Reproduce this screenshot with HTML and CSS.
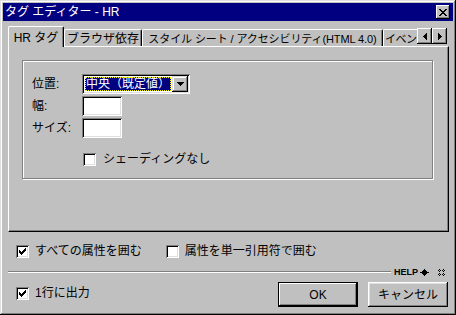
FILE: index.html
```html
<!DOCTYPE html>
<html lang="ja">
<head>
    <meta charset="UTF-8">
    <title>タグ エディター - HR</title>
    <link rel="stylesheet" href="styles.css">
</head>
<body>
    <div class="window">
        <div class="titlebar">
            <span class="title">タグ エディター - HR</span>
            <button class="close-btn">
                <svg width="8" height="7" viewBox="0 0 8 7" shape-rendering="crispEdges">
                    <path d="M0 0h2v1h-2zM6 0h2v1h-2zM1 1h2v1h-2zM5 1h2v1h-2zM2 2h4v1h-4zM3 3h2v1h-2zM2 4h4v1h-4zM1 5h2v1h-2zM5 5h2v1h-2zM0 6h2v1h-2zM6 6h2v1h-2z" fill="#000"/>
                </svg>
            </button>
        </div>

        <div class="tab-strip">
            <div class="tab tab-active tab-hr">HR タグ</div>
            <div class="tab tab-browser">ブラウザ依存</div>
            <div class="tab tab-style">スタイル シート / アクセシビリティ(HTML 4.0)</div>
            <div class="tab tab-event">イベン</div>
            <div class="tab-scroll">
                <button class="scroll-btn">
                    <svg width="4" height="7" viewBox="0 0 4 7" shape-rendering="crispEdges"><path d="M3 0h1v7h-1zM2 1h1v5h-1zM1 2h1v3h-1zM0 3h1v1h-1z" fill="#000"/></svg>
                </button>
                <button class="scroll-btn">
                    <svg width="4" height="7" viewBox="0 0 4 7" shape-rendering="crispEdges"><path d="M0 0h1v7h-1zM1 1h1v5h-1zM2 2h1v3h-1zM3 3h1v1h-1z" fill="#000"/></svg>
                </button>
            </div>
        </div>

        <div class="panel">
            <div class="group">
                <div class="field">
                    <span class="label">位置:</span>
                    <div class="select">
                        <span class="select-value"><span class="focus">中央（既定値）</span></span>
                        <span class="select-btn">
                            <svg width="7" height="4" viewBox="0 0 7 4" shape-rendering="crispEdges"><path d="M0 0h7v1h-7zM1 1h5v1h-5zM2 2h3v1h-3zM3 3h1v1h-1z" fill="#000"/></svg>
                        </span>
                    </div>
                </div>
                <div class="field">
                    <span class="label">幅:</span>
                    <div class="input"></div>
                </div>
                <div class="field">
                    <span class="label">サイズ:</span>
                    <div class="input"></div>
                </div>
                <label class="check shading">
                    <span class="box"></span>
                    <span>シェーディングなし</span>
                </label>
            </div>
        </div>

        <div class="options">
            <label class="check quote-all">
                <span class="box checked">
                    <svg width="7" height="7" viewBox="0 0 7 7" shape-rendering="crispEdges"><path d="M6 0h1v3h-1zM5 1h1v3h-1zM4 2h1v3h-1zM3 3h1v3h-1zM2 4h1v3h-1zM1 3h1v3h-1zM0 2h1v3h-1z" fill="#000"/></svg>
                </span>
                <span>すべての属性を囲む</span>
            </label>
            <label class="check">
                <span class="box"></span>
                <span>属性を単一引用符で囲む</span>
            </label>
        </div>

        <div class="sep-row">
            <div class="sep"></div>
            <span class="help">HELP</span>
            <svg class="help-icon" width="9" height="7" viewBox="0 0 9 7" shape-rendering="crispEdges">
                <path d="M4 0h1v1h-1zM3 1h3v1h-3zM2 2h5v1h-5zM0 3h9v1h-9zM2 4h5v1h-5zM3 5h3v1h-3zM4 6h1v1h-1z" fill="#000"/>
            </svg>
            <svg class="grip-icon" width="7" height="7" viewBox="0 0 7 7" shape-rendering="crispEdges">
                <path d="M1 0h1v1h-1zM0 1h1v1h-1zM2 1h1v1h-1zM1 2h1v1h-1zM5 0h1v1h-1zM4 1h1v1h-1zM6 1h1v1h-1zM5 2h1v1h-1zM1 4h1v1h-1zM0 5h1v1h-1zM2 5h1v1h-1zM1 6h1v1h-1zM5 4h1v1h-1zM4 5h1v1h-1zM6 5h1v1h-1zM5 6h1v1h-1z" fill="#000"/>
            </svg>
        </div>

        <div class="footer">
            <label class="check one-line">
                <span class="box checked">
                    <svg width="7" height="7" viewBox="0 0 7 7" shape-rendering="crispEdges"><path d="M6 0h1v3h-1zM5 1h1v3h-1zM4 2h1v3h-1zM3 3h1v3h-1zM2 4h1v3h-1zM1 3h1v3h-1zM0 2h1v3h-1z" fill="#000"/></svg>
                </span>
                <span>1行に出力</span>
            </label>
            <div class="buttons">
                <button class="btn btn-default">OK</button>
                <button class="btn">キャンセル</button>
            </div>
        </div>
    </div>
</body>
</html>
```

FILE: styles.css
```css
* {
    margin: 0;
    padding: 0;
    box-sizing: border-box;
}

body {
    background: #c0c0c0;
    font-family: "Liberation Sans", "Noto Sans CJK JP", sans-serif;
    font-size: 12px;
    line-height: 14px;
    color: #000;
}

button {
    font: inherit;
    color: inherit;
    border: none;
    background: #c0c0c0;
}

.window {
    width: 456px;
    height: 315px;
    padding: 3px;
    background: #c0c0c0;
    display: flex;
    flex-direction: column;
    box-shadow: inset -1px -1px #000, inset 1px 1px #dfdfdf, inset -2px -2px #808080, inset 2px 2px #fff;
}

.titlebar {
    height: 18px;
    background: #000080;
    color: #fff;
    display: flex;
    align-items: center;
    justify-content: space-between;
    padding: 0 3px 0 2px;
}

.close-btn {
    width: 14px;
    height: 14px;
    display: flex;
    align-items: center;
    justify-content: center;
    box-shadow: inset -1px -1px #000, inset 1px 1px #fff, inset -2px -2px #808080;
}

/* tabs */
.tab-strip {
    display: flex;
    align-items: flex-end;
    height: 20px;
    margin: 5px 4px 0 5px;
}

.tab {
    height: 17px;
    padding-top: 2px;
    text-align: center;
    white-space: nowrap;
    border-top: 1px solid #fff;
    border-left: 1px solid #fff;
    border-right: 1px solid #000;
    border-radius: 2px 2px 0 0;
    box-shadow: inset -1px 0 #808080;
    background: #c0c0c0;
}

.tab-active {
    position: relative;
    z-index: 1;
    height: 21px;
    margin-bottom: -1px;
    padding-top: 4px;
}

.tab-hr { width: 56px; }
.tab-browser { width: 78px; }

.tab-style {
    width: 241px;
    font-size: 11px;
    letter-spacing: -0.1px;
}

.tab-event {
    width: 34px;
    font-size: 11px;
    text-align: left;
    padding-left: 1px;
    letter-spacing: -0.5px;
    overflow: hidden;
    border-right: none;
    box-shadow: none;
    border-radius: 2px 0 0 0;
}

.tab-scroll {
    align-self: flex-start;
    margin-top: 2px;
    display: flex;
}

.scroll-btn {
    width: 15px;
    height: 16px;
    display: flex;
    align-items: center;
    justify-content: center;
    box-shadow: inset -1px -1px #000, inset 1px 1px #fff, inset -2px -2px #808080;
}

/* panel */
.panel {
    height: 186px;
    margin: 0 4px 0 5px;
    padding: 13px 0 0 13px;
    border-top: 1px solid #fff;
    border-left: 1px solid #fff;
    border-right: 1px solid #000;
    border-bottom: 1px solid #000;
    box-shadow: inset -1px -1px #808080;
}

.group {
    width: 411px;
    height: 119px;
    padding: 13px 0 0 9px;
    border: 1px solid #808080;
    box-shadow: inset 1px 1px #fff, 1px 1px #fff;
    display: flex;
    flex-direction: column;
    gap: 2px;
}

.field {
    display: flex;
    align-items: center;
}

.label {
    width: 50px;
}

.select {
    width: 108px;
    height: 20px;
    display: flex;
    padding: 2px;
    background: #fff;
    box-shadow: inset 1px 1px #808080, inset -1px -1px #fff, inset 2px 2px #000, inset -2px -2px #dfdfdf;
}

.select-value {
    flex: 1;
    padding: 1px;
}

.focus {
    display: block;
    height: 14px;
    padding-left: 1px;
    background: #000080;
    color: #fff;
    outline: 1px dotted #ffff00;
    outline-offset: -1px;
}

.select-btn {
    width: 16px;
    display: flex;
    align-items: center;
    justify-content: center;
    background: #c0c0c0;
    box-shadow: inset -1px -1px #000, inset 1px 1px #dfdfdf, inset -2px -2px #808080, inset 2px 2px #fff;
}

.input {
    width: 40px;
    height: 20px;
    background: #fff;
    box-shadow: inset 1px 1px #808080, inset -1px -1px #fff, inset 2px 2px #000, inset -2px -2px #dfdfdf;
}

/* checkboxes */
.check {
    display: flex;
    align-items: center;
    gap: 6px;
}

.box {
    width: 13px;
    height: 13px;
    display: flex;
    align-items: center;
    justify-content: center;
    background: #fff;
    box-shadow: inset 1px 1px #808080, inset -1px -1px #fff, inset 2px 2px #000, inset -2px -2px #dfdfdf;
}

.shading {
    margin: 12px 0 0 51px;
    gap: 7px;
}

.options {
    display: flex;
    align-items: center;
    gap: 24px;
    height: 16px;
    margin-top: 11px;
    padding-left: 13px;
}

.sep-row {
    display: flex;
    align-items: center;
    height: 8px;
    margin: 9px 8px 0 5px;
}

.sep {
    flex: 1;
    height: 2px;
    border-top: 1px solid #808080;
    border-bottom: 1px solid #fff;
    margin-right: 3px;
}

.help {
    font-size: 9px;
    font-weight: bold;
    line-height: 8px;
}

.help-icon {
    margin-left: 2px;
}

.grip-icon {
    margin-left: 9px;
}

.footer {
    display: flex;
    justify-content: space-between;
    margin: 6px 5px 0 13px;
}

.one-line {
    align-self: flex-start;
    margin-top: 4px;
}

.buttons {
    display: flex;
    gap: 10px;
}

.btn {
    width: 80px;
    height: 25px;
    box-shadow: inset -1px -1px #000, inset 1px 1px #fff, inset -2px -2px #808080, inset 2px 2px #dfdfdf;
}

.btn-default {
    box-shadow: inset 0 0 0 1px #000, inset -2px -2px #000, inset 2px 2px #fff, inset -3px -3px #808080;
}
```
